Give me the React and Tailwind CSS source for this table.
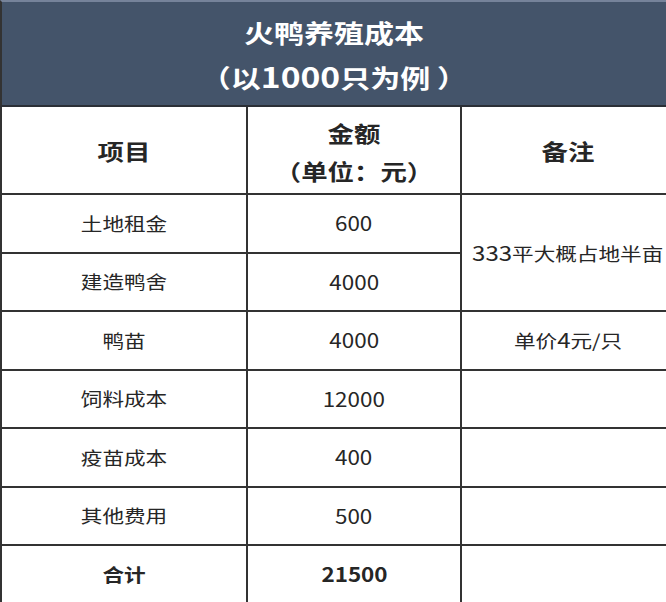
import React from "react";

const rows = [
  { item: "土地租金", amount: "600" },
  { item: "建造鸭舍", amount: "4000" },
  { item: "鸭苗", amount: "4000", note: "单价4元/只" },
  { item: "饲料成本", amount: "12000", note: "" },
  { item: "疫苗成本", amount: "400", note: "" },
  { item: "其他费用", amount: "500", note: "" },
  { item: "合计", amount: "21500", note: "", bold: true },
];

const cell = "flex flex-col items-center justify-center border-l-2 border-b-2 border-[#333]";

function T({ children, className = "" }) {
  // source picture is stretched sideways a little
  return <span className={"inline-block scale-x-[1.2] whitespace-nowrap " + className}>{children}</span>;
}

export default function App() {
  return (
    <div
      className="w-[666px] h-[602px] overflow-hidden bg-white text-[#262626]"
      style={{ fontFamily: '"Noto Sans CJK SC", "Noto Sans", sans-serif' }}
    >
      <div className="h-[107px] flex flex-col items-center justify-center gap-[10px] bg-[#44546a] border-t-2 border-t-[#76839a] border-l-2 border-l-[#333] border-b-2 border-b-[#2b2f36] text-white font-bold text-[25px] leading-[34px] pt-[2px]">
        <T>火鸭养殖成本</T>
        <T>
          （以<span className="text-[28px]">1000</span>只为例 ）
        </T>
      </div>

      <div className="grid grid-cols-[246px_214px_214px] grid-rows-[88px_repeat(7,58.5px)]">
        <div className={cell}>
          <T className="font-bold text-[22px]">项目</T>
        </div>
        <div className={cell + " gap-[8px] pt-[2px]"}>
          <T className="font-bold text-[22px] leading-[30px]">金额</T>
          <T className="font-bold text-[22px] leading-[30px]">（单位：元）</T>
        </div>
        <div className={cell}>
          <T className="font-bold text-[22px]">备注</T>
        </div>

        {rows.map((r, i) => (
          <React.Fragment key={i}>
            <div className={cell}>
              <T className={"text-[18px] " + (r.bold ? "font-bold" : "")}>{r.item}</T>
            </div>
            <div className={cell}>
              <T className={"text-[20px] scale-x-[1.12] " + (r.bold ? "font-bold" : "")}>{r.amount}</T>
            </div>
            {i === 0 && (
              <div className={cell + " row-span-2"}>
                <T className="text-[18px]">
                  <span className="text-[20px]">333</span>平大概占地半亩
                </T>
              </div>
            )}
            {r.note !== undefined && (
              <div className={cell}>
                <T className="text-[18px]">
                  {r.note && (
                    <>
                      单价<span className="text-[20px]">4</span>元/只
                    </>
                  )}
                </T>
              </div>
            )}
          </React.Fragment>
        ))}
      </div>
    </div>
  );
}
